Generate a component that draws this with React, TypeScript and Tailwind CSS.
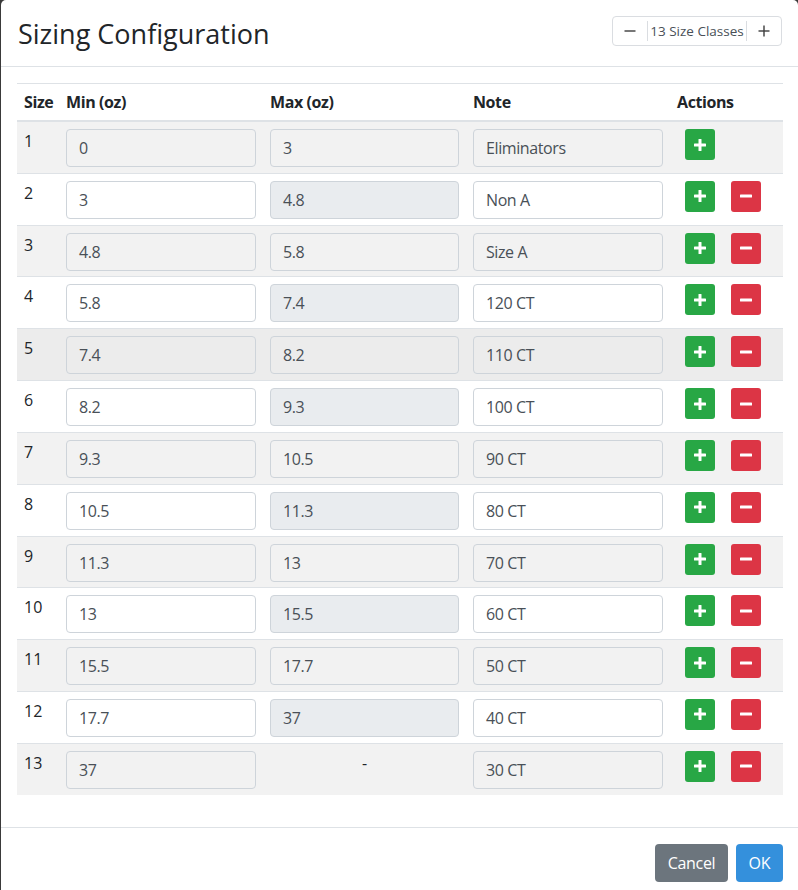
import React from "react";

type Row = { size: number; min: string; max: string | null; note: string };

const rows: Row[] = [
  { size: 1, min: "0", max: "3", note: "Eliminators" },
  { size: 2, min: "3", max: "4.8", note: "Non A" },
  { size: 3, min: "4.8", max: "5.8", note: "Size A" },
  { size: 4, min: "5.8", max: "7.4", note: "120 CT" },
  { size: 5, min: "7.4", max: "8.2", note: "110 CT" },
  { size: 6, min: "8.2", max: "9.3", note: "100 CT" },
  { size: 7, min: "9.3", max: "10.5", note: "90 CT" },
  { size: 8, min: "10.5", max: "11.3", note: "80 CT" },
  { size: 9, min: "11.3", max: "13", note: "70 CT" },
  { size: 10, min: "13", max: "15.5", note: "60 CT" },
  { size: 11, min: "15.5", max: "17.7", note: "50 CT" },
  { size: 12, min: "17.7", max: "37", note: "40 CT" },
  { size: 13, min: "37", max: null, note: "30 CT" },
];

function PlusIcon() {
  return (
    <svg width="12" height="12" viewBox="0 0 12 12" fill="white">
      <rect x="4.5" y="0" width="3" height="12" rx="0.6" />
      <rect x="0" y="4.5" width="12" height="3" rx="0.6" />
    </svg>
  );
}

function MinusIcon() {
  return (
    <svg width="12" height="12" viewBox="0 0 12 12" fill="white">
      <rect x="0" y="4.5" width="12" height="3" rx="0.6" />
    </svg>
  );
}

function Field({ value, kind }: { value: string; kind: "odd" | "white" | "ro" }) {
  const bg =
    kind === "odd" ? "bg-transparent" : kind === "white" ? "bg-white" : "bg-[#e9ecef]";
  return (
    <div
      className={`h-[38px] w-full rounded-[4px] border border-[#ced4da] ${bg} px-3 flex items-center text-[16px] tracking-[-0.4px] text-[#495057]`}
    >
      {value}
    </div>
  );
}

export default function App() {
  return (
    <div className="min-h-[890px] w-[798px] bg-[#3a3a3a] flex" style={{ fontFamily: '"Open Sans", "Noto Sans", sans-serif' }}>
      <div className="ml-[1px] flex-1 bg-white rounded-t-[5px] min-h-[890px]">
        {/* Header */}
        <div className="h-[67px] border-b border-[#dee2e6] flex items-start justify-between pl-[17px] pr-[16px] pt-[16px]">
          <h4 className="text-[27px] leading-[36px] text-[#212529] font-normal">Sizing Configuration</h4>
          <div className="h-[30px] w-[170px] rounded-[4px] border border-[#dadde1] flex items-center text-[#495057]">
            <div className="w-[34px] h-full flex items-center justify-center">
              <svg width="12" height="12" viewBox="0 0 12 12">
                <line x1="0.5" y1="6" x2="11.5" y2="6" stroke="#3d3d3d" strokeWidth="1.4" />
              </svg>
            </div>
            <div className="h-[20px] flex-1 border-x border-[#dadde1] flex items-center justify-center text-[13.5px] whitespace-nowrap">
              13 Size Classes
            </div>
            <div className="w-[34px] h-full flex items-center justify-center">
              <svg width="12" height="12" viewBox="0 0 12 12">
                <line x1="0.5" y1="6" x2="11.5" y2="6" stroke="#3d3d3d" strokeWidth="1.4" />
                <line x1="6" y1="0.5" x2="6" y2="11.5" stroke="#3d3d3d" strokeWidth="1.4" />
              </svg>
            </div>
          </div>
        </div>

        {/* Body */}
        <div className="pt-[16px] pl-[16px] pr-[15px] pb-[32px]">
          <div className="border-t border-[#dee2e6] text-[#212529] text-[16px]">
            <div className="grid grid-cols-[42px_204px_203px_204px_112px] border-b-2 border-[#dee2e6] font-bold tracking-[-0.4px]">
              <div className="px-[7px] py-[6px] leading-[24px]">Size</div>
              <div className="px-[7px] py-[6px] leading-[24px]">Min (oz)</div>
              <div className="px-[7px] py-[6px] leading-[24px]">Max (oz)</div>
              <div className="px-[7px] py-[6px] leading-[24px]">Note</div>
              <div className="px-[7px] py-[6px] leading-[24px]">Actions</div>
            </div>
            {rows.map((r, i) => {
              const odd = i % 2 === 0;
              const rowBg = r.size === 5 ? "bg-[#ececec]" : odd ? "bg-[#f2f2f2]" : "bg-white";
              return (
                <div
                  key={r.size}
                  className={`grid grid-cols-[42px_204px_203px_204px_112px] ${i === 0 ? "" : "border-t border-[#dee2e6]"} ${rowBg}`}
                >
                  <div className="px-[7px] pt-[7px] pb-[5.82px] leading-[24px]">{r.size}</div>
                  <div className="px-[7px] pt-[7px] pb-[5.82px]">
                    <Field value={r.min} kind={odd ? "odd" : "white"} />
                  </div>
                  <div className="px-[7px] pt-[7px] pb-[5.82px]">
                    {r.max === null ? (
                      <div className="text-center leading-[24px]">-</div>
                    ) : (
                      <Field value={r.max} kind={odd ? "odd" : "ro"} />
                    )}
                  </div>
                  <div className="px-[7px] pt-[7px] pb-[5.82px]">
                    <Field value={r.note} kind={odd ? "odd" : "white"} />
                  </div>
                  <div className="px-[7px] pt-[7px] pb-[5.82px] flex items-start gap-4">
                    <button className="ml-[8px] w-[30px] h-[31px] rounded-[3px] bg-[#28a745] flex items-center justify-center">
                      <PlusIcon />
                    </button>
                    {r.size !== 1 && (
                      <button className="w-[30px] h-[31px] rounded-[3px] bg-[#dc3545] flex items-center justify-center">
                        <MinusIcon />
                      </button>
                    )}
                  </div>
                </div>
              );
            })}
          </div>
        </div>

        {/* Footer */}
        <div className="border-t border-[#dee2e6] pt-[16px] pr-[15px] flex justify-end gap-2">
          <button className="h-[38px] w-[73px] rounded-[4px] bg-[#6c757d] text-white text-[16px] tracking-[-0.3px]">Cancel</button>
          <button className="h-[38px] w-[47px] rounded-[4px] bg-[#3490dc] text-white text-[16px]">OK</button>
        </div>
      </div>
    </div>
  );
}
